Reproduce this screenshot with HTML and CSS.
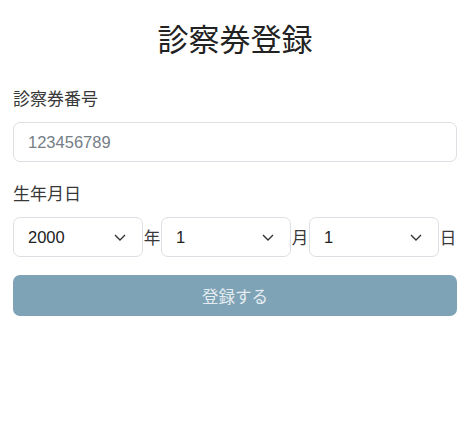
FILE: index.html
```html
<!DOCTYPE html>
<html lang="ja">
<head>
    <meta charset="UTF-8">
    <meta name="viewport" content="width=device-width, initial-scale=1.0">
    <title>診察券登録</title>
    <link rel="stylesheet" href="styles.css">
</head>
<body>
    <div class="container">
        <h1 class="title">診察券登録</h1>

        <form id="cardForm">
            <label class="label" for="cardNumber">診察券番号</label>
            <input class="input" type="text" id="cardNumber" name="cardNumber" placeholder="123456789">

            <label class="label label-birth" for="year">生年月日</label>
            <div class="birth-row">
                <select class="select" id="year" name="year">
                    <option value="2000" selected>2000</option>
                </select>
                <span class="unit">年</span>
                <select class="select" id="month" name="month">
                    <option value="1" selected>1</option>
                </select>
                <span class="unit">月</span>
                <select class="select" id="day" name="day">
                    <option value="1" selected>1</option>
                </select>
                <span class="unit">日</span>
            </div>

            <button type="submit" class="btn" disabled>登録する</button>
        </form>
    </div>
</body>
</html>
```

FILE: styles.css
```css
body { margin: 0; background: #fff; color: #2b2b2b; font-family: "Liberation Sans", "Noto Sans CJK JP", sans-serif; }
.container { padding: 0 13px; }
.title { margin: 22px 0 0; font-size: 31px; line-height: 37px; font-weight: 400; text-align: center; color: #222; }
.label { display: block; margin-top: 29px; font-size: 17px; line-height: 24px; color: #383838; }
.label-birth { margin-top: 21px; }
.input { display: block; box-sizing: border-box; width: 100%; height: 40px; margin-top: 10px; padding: 0 14px; border: 1px solid #dcdfe3; border-radius: 7px; font-family: inherit; font-size: 16.5px; color: #222; outline: none; }
.input::placeholder { color: #767e86; }
.birth-row { display: flex; align-items: center; margin-top: 10px; }
.select { flex: 1; min-width: 0; box-sizing: border-box; height: 40px; padding: 0 14px; border: 1px solid #dcdfe3; border-radius: 7px; background: #fff url("data:image/svg+xml,%3csvg xmlns='http://www.w3.org/2000/svg' width='12' height='7' viewBox='0 0 12 7'%3e%3cpath d='M1 1l5 5 5-5' fill='none' stroke='%23333' stroke-width='1.4'/%3e%3c/svg%3e") no-repeat right 16px center; -webkit-appearance: none; appearance: none; font-family: inherit; font-size: 16.5px; color: #222; }
.unit { width: 18px; text-align: center; font-size: 16.5px; color: #383838; }
.btn { display: block; width: 100%; height: 41px; margin-top: 18px; border: none; border-radius: 7px; background: #7ea3b6; color: #e4ecf1; font-family: inherit; font-size: 16.5px; }
```
